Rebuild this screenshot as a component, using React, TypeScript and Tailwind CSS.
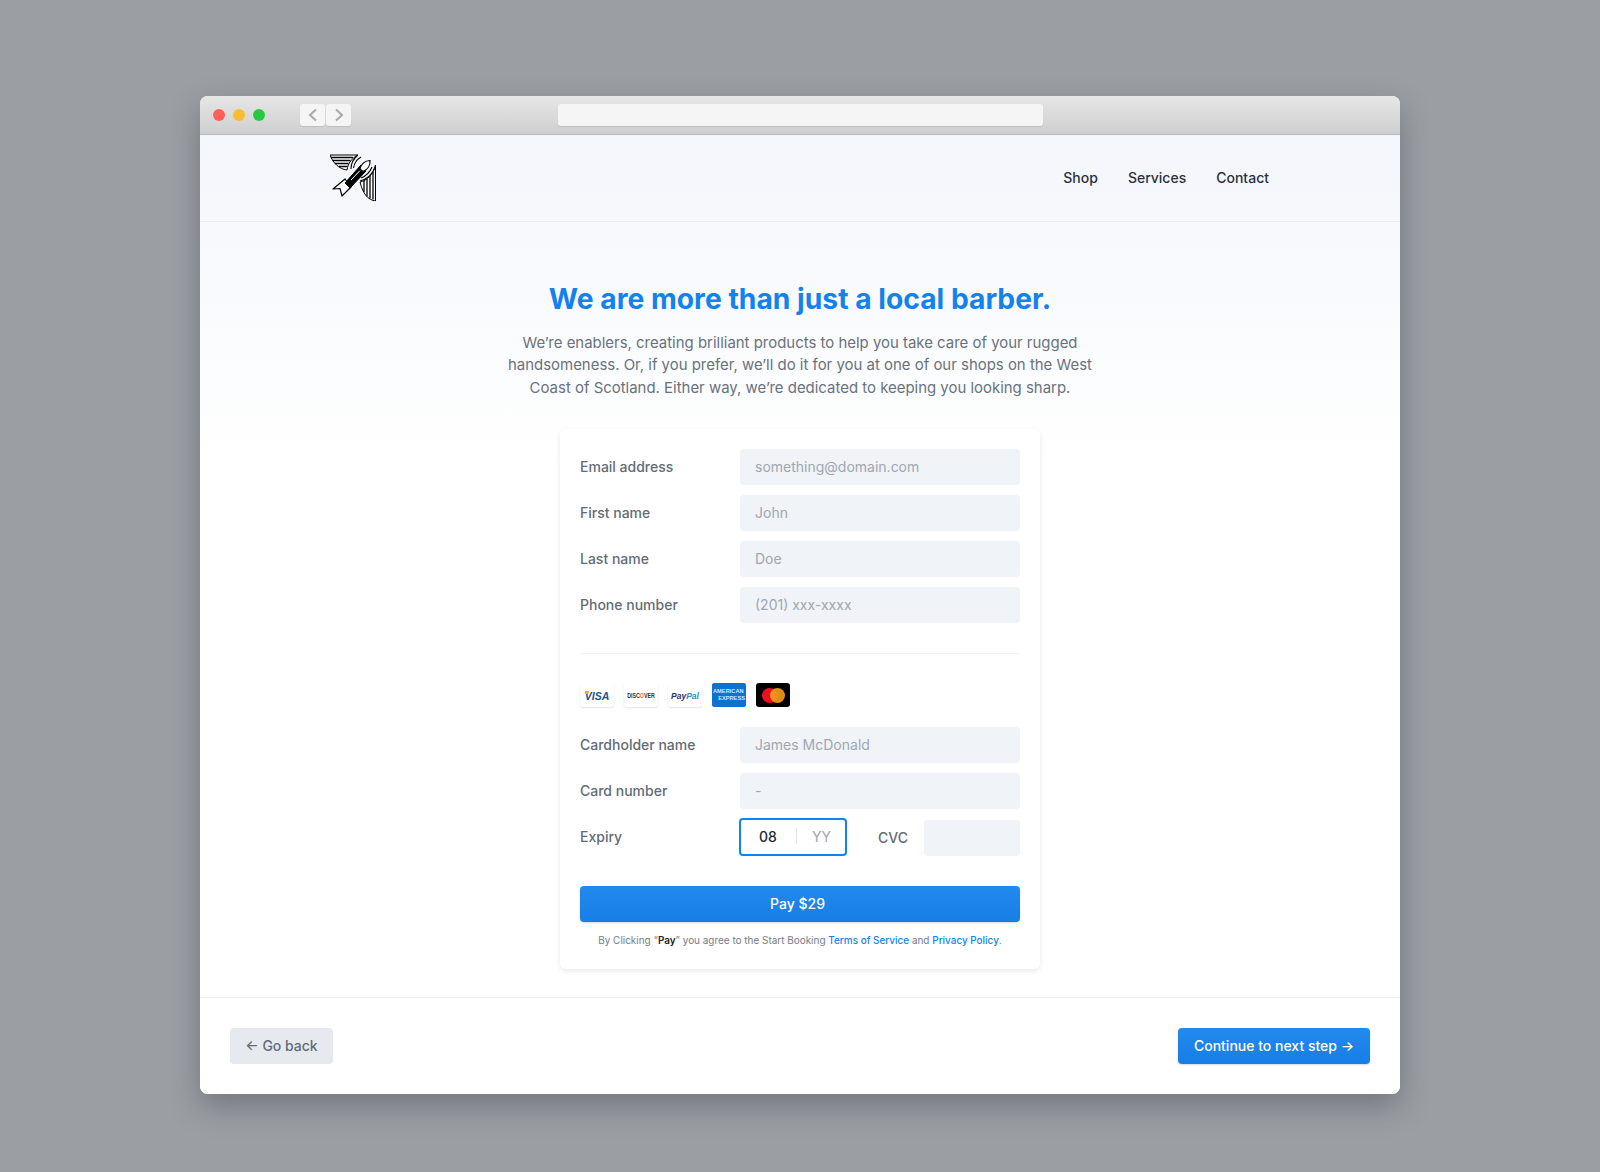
const fields = [
  { label: "Email address", placeholder: "something@domain.com" },
  { label: "First name", placeholder: "John" },
  { label: "Last name", placeholder: "Doe" },
  { label: "Phone number", placeholder: "(201) xxx-xxxx" },
];

const Field = ({ label, placeholder }: { label: string; placeholder: string }) => (
  <div className="flex items-center">
    <label className="w-[160px] pb-[2px] text-[14px] font-medium text-[#626b76]">{label}</label>
    <input
      readOnly
      placeholder={placeholder}
      className="h-9 w-[280px] rounded-[4px] bg-[#f0f3f8] px-[15px] pb-[2px] text-[14px] outline-none placeholder:text-[#a0a7b0]"
    />
  </div>
);

const BirdLogo = () => (
  <svg viewBox="10 9 47 47" className="-mt-[1px] h-[47px] w-[47px]" fill="none" stroke="#000">
    {/* top wing */}
    <path d="M10 10H38C32 13 28 18 27 25C19 24 13 18 10 10Z" fill="#fff" strokeWidth="1" />
    <path d="M11 12.500H33M12.500 15.500H30.500M15 18.500H28.500M19 21.500H27.500" strokeWidth="1.300" />
    {/* right wing */}
    <path d="M55.500 20V56C48 55 43 49 40 37C47 36 53 29 55.500 20Z" fill="#fff" strokeWidth="1" />
    <path d="M53 27V54.500M50 31V53.500M47 34V51.500M44 36V47" strokeWidth="1.300" />
    {/* feather arcs */}
    <path d="M38 10C33 14 31 19 31 24M41 12C36 15 34 19 33.500 23M55 23C52 30 47 34 40 36M52 22C50 27 46 31 41 33" strokeWidth="1.100" />
    {/* tail */}
    <path d="M13 44L25 34L31 42L22 51L20 43.500L13 44Z" fill="#fff" strokeWidth="1.200" strokeLinejoin="round" />
    {/* body */}
    <path d="M25 38L41 20L46 26L30 43Z" fill="#000" />
    <path d="M31 35L40 25.500" stroke="#fff" strokeWidth="1" />
    {/* head */}
    <path d="M40 24C41 19 45 15.500 50 15.500C50.500 21 47 25 43 26.500Z" fill="#fff" strokeWidth="1.200" />
  </svg>
);

const CardTile = ({ children }: { children: React.ReactNode }) => (
  <div className="relative flex h-6 w-[34px] items-center justify-center whitespace-nowrap rounded-[3px] bg-white pt-[2px] shadow-[0_1px_2px_rgba(30,40,60,0.12)]">
    {children}
  </div>
);

const CardLogos = () => (
  <div className="flex gap-[10px]">
    <CardTile>
      <span className="[font-family:'Liberation_Sans',sans-serif] text-[10.500px] font-bold italic leading-none text-[#17539a]">VISA</span>
      <span className="absolute left-[5px] top-[8px] h-[3px] w-[4px] rounded-br-[3px] bg-[#f0a92e]" />
    </CardTile>
    <CardTile>
      <span className="scale-y-125 [font-family:'Liberation_Sans',sans-serif] text-[5.300px] font-bold leading-none text-[#333]">
        DISC<span className="text-[#ee7a22]">O</span>VER
      </span>
    </CardTile>
    <CardTile>
      <span className="[font-family:'Liberation_Sans',sans-serif] text-[8.500px] font-bold italic leading-none text-[#27346a]">
        Pay<span className="text-[#2a8ccd]">Pal</span>
      </span>
    </CardTile>
    <div className="flex h-6 w-[34px] flex-col justify-center whitespace-nowrap rounded-[2px] bg-[#0d72d1] px-px [font-family:'Liberation_Sans',sans-serif] text-[5.700px] font-bold leading-[7px] text-[#cfe6fa]">
      <span>AMERICAN</span>
      <span className="text-right">EXPRESS</span>
    </div>
    <div className="flex h-6 w-[34px] items-center justify-center rounded-[3px] bg-black">
      <div className="h-[15px] w-[15px] rounded-full bg-[#e8121f]" />
      <div className="-ml-[7px] h-[15px] w-[15px] rounded-full bg-[#f79e1b]/90" />
    </div>
  </div>
);

export default function App() {
  return (
    <div className="min-h-[1172px] bg-[#9b9fa4] pt-[96px] [font-family:Inter,sans-serif]">
      <div className="mx-auto w-[1200px] overflow-hidden rounded-[8px] bg-white shadow-[0_12px_30px_rgba(40,45,55,0.35)]">
        {/* Window title bar */}
        <div className="flex h-[39px] items-center border-b border-[#b8b9ba] bg-gradient-to-b from-[#e6e6e6] to-[#cfcfcf] pl-[13px]">
          <div className="flex gap-2">
            <div className="h-3 w-3 rounded-full bg-[#ff5f57]" />
            <div className="h-3 w-3 rounded-full bg-[#febc2e]" />
            <div className="h-3 w-3 rounded-full bg-[#28c840]" />
          </div>
          <div className="ml-[35px] flex gap-px">
            <div className="flex h-[22px] w-[25px] items-center justify-center rounded-[3px] bg-[#f5f5f5] shadow-[0_1px_1px_rgba(0,0,0,0.1)]">
              <svg viewBox="0 0 10 14" className="h-[14px] w-[10px]" fill="none" stroke="#a9a9a9" strokeWidth="2"><path d="M8 1.500L2 7l6 5.500" /></svg>
            </div>
            <div className="flex h-[22px] w-[25px] items-center justify-center rounded-[3px] bg-[#f5f5f5] shadow-[0_1px_1px_rgba(0,0,0,0.1)]">
              <svg viewBox="0 0 10 14" className="h-[14px] w-[10px]" fill="none" stroke="#a9a9a9" strokeWidth="2"><path d="M2 1.500L8 7l-6 5.500" /></svg>
            </div>
          </div>
          <div className="ml-[207px] h-[22px] w-[485px] rounded-[3px] bg-[#f5f5f5] shadow-[0_1px_1px_rgba(0,0,0,0.1)]" />
        </div>

        <div className="bg-gradient-to-b from-[#f3f6fb] to-white to-[330px]">
          {/* Header */}
          <header className="flex h-[87px] items-center justify-between border-b border-[#e8ebf0] pl-[130px] pr-[131px]">
            <BirdLogo />
            <nav className="-mt-[1px] flex gap-[30px] text-[14px] font-medium text-[#2a313b]">
              <a>Shop</a>
              <a>Services</a>
              <a>Contact</a>
            </nav>
          </header>

          <main className="flex flex-col items-center pt-[58px]">
            <h1 className="text-[28.250px] font-bold leading-[38px] text-[#1482ea]">We are more than just a local barber.</h1>
            <p className="mt-[14px] w-[600px] text-center text-[14.950px] leading-[22.400px] text-[#69727d]">
              We’re enablers, creating brilliant products to help you take care of your rugged handsomeness. Or, if you prefer, we’ll do it for you at one of our shops on the West Coast of Scotland. Either way, we’re dedicated to keeping you looking sharp.
            </p>

            {/* Checkout card */}
            <div className="mt-[30px] w-[480px] rounded-[6px] bg-white px-5 pb-[23px] pt-5 shadow-[0_2px_5px_rgba(30,40,60,0.1)]">
              <div className="flex flex-col gap-[10px]">
                {fields.map((f) => (
                  <Field key={f.label} {...f} />
                ))}
              </div>
              <div className="mt-[30px] border-t border-[#f0f2f5]" />
              <div className="mt-[29px]">
                <CardLogos />
              </div>
              <div className="mt-5 flex flex-col gap-[10px]">
                <Field label="Cardholder name" placeholder="James McDonald" />
                <Field label="Card number" placeholder="-" />
                <div className="mt-px flex h-9 items-center">
                  <label className="-mt-[4px] w-[159px] text-[14px] font-medium text-[#626b76]">Expiry</label>
                  <div className="flex h-[38px] w-[108px] items-center self-end rounded-[4px] border-2 border-[#1482ea] pb-[2px] text-[14px]">
                    <span className="w-[55px] pl-[18px] font-medium text-[#1f2630]">08</span>
                    <span className="h-4 border-l border-[#e3e6ea]" />
                    <span className="pl-[15px] text-[#a0a7b0]">YY</span>
                  </div>
                  <label className="ml-[31px] w-[46px] pb-[2px] text-[14px] font-medium text-[#626b76]">CVC</label>
                  <input readOnly className="h-9 w-[96px] rounded-[4px] bg-[#f0f3f8] outline-none" />
                </div>
              </div>
              <button className="mt-[30px] h-9 w-full rounded-[4px] bg-gradient-to-b from-[#2289ee] to-[#177ee6] pb-[2px] pr-[5px] text-[14px] font-medium text-white shadow-[0_1px_2px_rgba(20,60,120,0.2)]">
                Pay $29
              </button>
              <p className="mt-[12px] text-center text-[9.950px] leading-[12px] text-[#737c87]">
                By Clicking “<b className="font-semibold text-[#222]">Pay</b>” you agree to the Start Booking{" "}
                <a className="font-medium text-[#1482ea]">Terms of Service</a> and{" "}
                <a className="font-medium text-[#1482ea]">Privacy Policy</a>.
              </p>
            </div>
          </main>

          {/* Footer actions */}
          <footer className="mt-[28px] flex items-center justify-between border-t border-[#eef0f3] p-[30px]">
            <button className="h-9 w-[103px] rounded-[4px] bg-[#e6eaef] pb-[2px] text-[14px] font-medium text-[#626b76]">← Go back</button>
            <button className="h-9 w-[192px] rounded-[4px] bg-gradient-to-b from-[#2289ee] to-[#177ee6] pb-[2px] text-[14px] font-medium text-white shadow-[0_1px_2px_rgba(20,60,120,0.2)]">
              Continue to next step →
            </button>
          </footer>
        </div>
      </div>
    </div>
  );
}
